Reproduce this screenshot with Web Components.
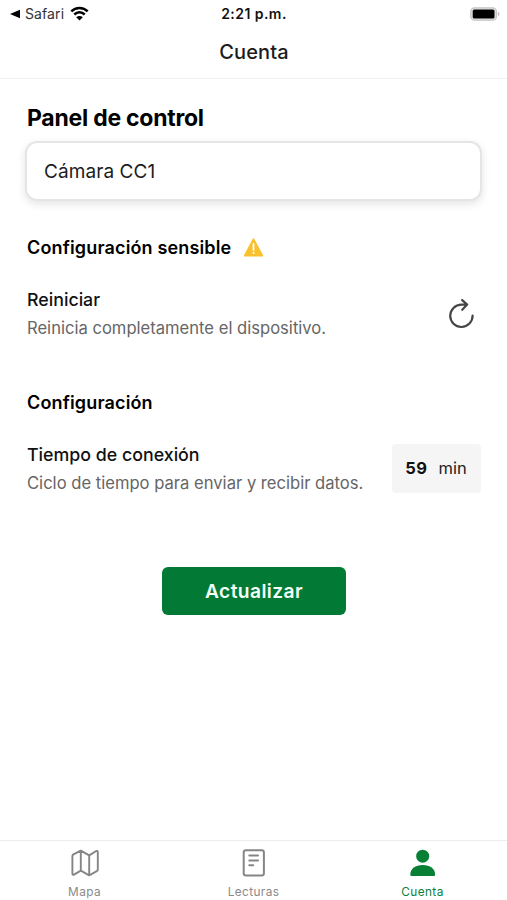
<!DOCTYPE html>
<html lang="es">
<head>
<meta charset="utf-8">
<title>Cuenta</title>
<style>
html,body{margin:0;height:100%;background:#fff}
body{font-family:Inter,"Liberation Sans",sans-serif;color:#111;overflow:hidden}
</style>
</head>
<body>
<account-app></account-app>
<script>
const define = (name, html) => customElements.define(name, class extends HTMLElement {
  constructor() {
    super();
    const t = document.createElement('template');
    t.innerHTML = html;
    this.attachShadow({mode: 'open'}).append(t.content.cloneNode(true));
  }
});

define('status-bar', `
<style>
:host{display:grid;grid-template-columns:1fr auto 1fr;align-items:center;height:27px;padding:0 7px 0 8px;box-sizing:border-box;font-size:14px;line-height:18px}
.left{display:flex;align-items:center;color:#333;padding-left:2px}
.left span{margin:0 6px 0 5px;letter-spacing:.1px}
.time{font-weight:600;font-size:14px;letter-spacing:.45px;color:#111}
.battery{justify-self:end}
svg{display:block}
</style>
<div class="left">
<svg width="10" height="10" viewBox="0 0 10 10"><path d="M0 5 10 .8V9.2Z" fill="#000"/></svg>
<span>Safari</span>
<svg width="19" height="15" viewBox="0 0 19 15" fill="none" stroke="#000" stroke-width="2.5"><path d="M1.3 5.4C5.8.8 13.2.8 17.7 5.4M4.3 8.5c2.9-2.9 7.5-2.9 10.4 0"/><path d="M9.5 14.5 6.2 11.2c1.8-1.7 4.8-1.7 6.6 0Z" fill="#000" stroke="none"/></svg>
</div>
<div class="time">2:21 p.m.</div>
<svg class="battery" width="30" height="14" viewBox="0 0 30 14"><rect x=".8" y=".8" width="25.6" height="12.4" rx="3.8" fill="#e4e4e4" stroke="#c4c4c4" stroke-width="1.3"/><rect x="2.7" y="2.5" width="21.8" height="9" rx="1.6" fill="#000"/><path d="M27.9 4.8c2 .7 2 3.7 0 4.4Z" fill="#bdbdbd"/></svg>
`);

define('page-title', `
<style>
:host{display:flex;justify-content:center;align-items:center;height:52px;box-sizing:border-box;padding:0 0 1px 1px;border-bottom:1px solid #f0f0f0;font-size:20px;font-weight:500;letter-spacing:.15px;color:#1c1c1e}
</style><slot></slot>`);

define('select-field', `
<style>
:host{display:flex;align-items:center;box-sizing:border-box;height:60px;padding:0 17px;margin:0 -1px 0 -2px;border:2px solid #e5e5e5;border-radius:12px;background:#fff;box-shadow:0 3px 8px rgba(0,0,0,.11);font-size:19px;letter-spacing:.08px;color:#1c1c1e}
</style><slot></slot>`);

define('section-title', `
<style>
:host{display:flex;align-items:center;height:24px;font-size:18px;font-weight:600;letter-spacing:.15px;color:#000;white-space:nowrap}
::slotted(warning-icon){margin-left:12px}
</style><slot></slot>`);

define('warning-icon', `
<style>:host{display:block}svg{display:block}</style>
<svg width="21" height="20" viewBox="0 0 21 20"><path d="M10.5 2.4 19.2 18.6H1.8Z" fill="#fbc02d" stroke="#fbc02d" stroke-width="2" stroke-linejoin="round"/><path d="M10.5 7v6" stroke="#fff" stroke-width="1.8" stroke-linecap="round"/><circle cx="10.5" cy="16" r="1.1" fill="#fff"/></svg>`);

define('setting-row', `
<style>
:host{display:flex;justify-content:space-between;align-items:center;height:50px}
.title{font-size:17.8px;line-height:24px;font-weight:500;color:#111}
.desc{margin-top:5px;font-size:16.6px;line-height:22px;color:#666;white-space:nowrap}
.text{align-self:flex-start}
</style>
<div class="text"><div class="title"><slot name="title"></slot></div><div class="desc"><slot name="desc"></slot></div></div>
<slot></slot>`);

define('restart-icon', `
<style>:host{display:block;margin:2px 6px 0 0}svg{display:block}</style>
<svg width="28" height="30" viewBox="0 0 28 30" fill="none" stroke="#454545" stroke-width="2.2" stroke-linecap="round" stroke-linejoin="round"><path d="M25.6 16.6A11.2 11.2 0 1 1 14.4 5.6H19.9M15.2 1.1 20.2 5.6 15.2 10.8"/></svg>`);

define('minutes-field', `
<style>
:host{display:flex;align-items:center;justify-content:center;width:89px;height:49px;border-radius:4px;background:#f5f5f5;font-size:16.5px;color:#222}
b{font-weight:700;letter-spacing:.5px;margin:0 11px 0 -1px;color:#111}
</style><b><slot name="value"></slot></b><span><slot></slot></span>`);

define('primary-button', `
<style>
:host{display:block;width:184px;height:48px;margin:0 auto}
button{display:block;width:100%;height:100%;padding:0;border:0;border-radius:6px;background:#027a36;color:#f3fff7;font:600 19.2px Inter,"Liberation Sans",sans-serif;letter-spacing:.4px}
</style><button><slot></slot></button>`);

define('tab-item', `
<style>
:host{display:flex;flex-direction:column;align-items:center;flex:1;padding-top:7px;font-size:11.8px;line-height:15px;letter-spacing:.4px;color:#8a8a8a}
:host([active]){color:#0a7f3c}
.label{margin-top:7px}
::slotted(svg){display:block;flex-shrink:0}
</style><slot name="icon"></slot><div class="label"><slot></slot></div>`);

define('tab-bar', `
<style>:host{display:flex;height:60px;box-sizing:border-box;border-top:1px solid #ededed}</style><slot></slot>`);

define('account-app', `
<style>
:host{display:flex;flex-direction:column;height:900px;width:507px;background:#fff}
main{flex:1;padding:26px 26px 0 27px}
h1{margin:0;height:36px;font-size:23px;line-height:26px;font-weight:700;letter-spacing:-.25px;color:#000}
.sensitive{margin-top:34px}
.restart{margin-top:29px}
.config{margin-top:52px}
.time{margin-top:29px}
.update{margin-top:74px}
</style>
<status-bar></status-bar>
<page-title>Cuenta</page-title>
<main>
<h1>Panel de control</h1>
<select-field>Cámara CC1</select-field>
<section-title class="sensitive">Configuración sensible<warning-icon></warning-icon></section-title>
<setting-row class="restart"><span slot="title">Reiniciar</span><span slot="desc">Reinicia completamente el dispositivo.</span><restart-icon></restart-icon></setting-row>
<section-title class="config">Configuración</section-title>
<setting-row class="time"><span slot="title">Tiempo de conexión</span><span slot="desc">Ciclo de tiempo para enviar y recibir datos.</span><minutes-field><span slot="value">59</span>min</minutes-field></setting-row>
<primary-button class="update">Actualizar</primary-button>
</main>
<tab-bar>
<tab-item><svg slot="icon" width="30" height="30" viewBox="0 0 30 30" fill="none" stroke="#858585" stroke-width="1.9" stroke-linejoin="round"><path d="M2.4 8.2Q2.4 7 3.4 6.4L10.8 2.6 19.2 7.4 26.2 3Q27.8 2.4 27.8 4V21.5Q27.8 22.6 26.8 23.2L19.2 27.3 10.8 22.6 4 26.6Q2.4 27.3 2.4 25.6ZM10.8 2.6V22.6M19.2 7.4V27.3"/></svg>Mapa</tab-item>
<tab-item><svg slot="icon" width="30" height="30" viewBox="0 0 30 30" fill="none" stroke="#858585" stroke-width="2" stroke-linecap="round"><rect x="4.7" y="2.3" width="20.2" height="25.3" rx="2.3"/><path d="M10.3 7.5h8.7M10.3 12.4h8.7M10.3 17.3h3.9"/></svg>Lecturas</tab-item>
<tab-item active><svg slot="icon" width="30" height="30" viewBox=".3 0 30 30" fill="#078036"><circle cx="15" cy="8.2" r="6.5"/><path d="M2.6 26.8C2.6 20.5 7.6 17 15 17s12.4 3.5 12.4 9.8q0 1.2-1.2 1.2H3.8q-1.2 0-1.2-1.2Z"/></svg>Cuenta</tab-item>
</tab-bar>
`);
</script>
</body>
</html>
